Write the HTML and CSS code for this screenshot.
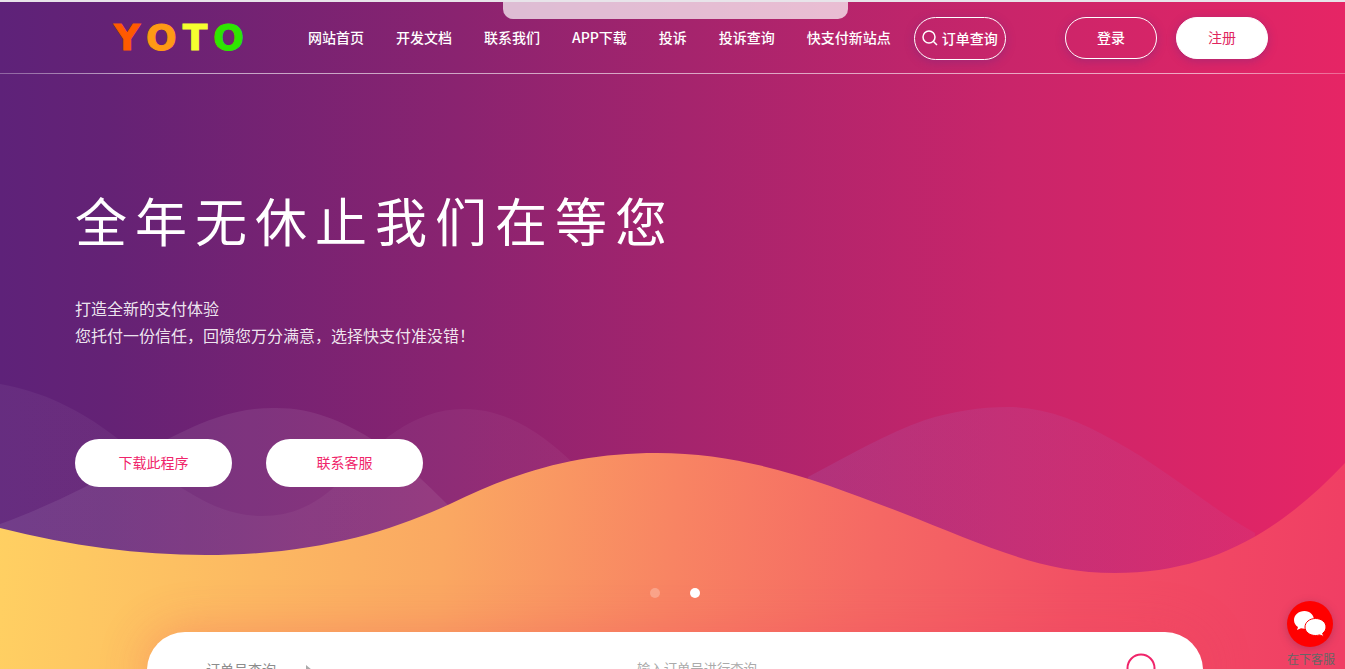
FILE: index.html
```html
<!DOCTYPE html>
<html lang="zh-CN">
<head>
    <meta charset="UTF-8">
    <meta name="viewport" content="width=device-width, initial-scale=1.0">
    <title>YOTO 快支付</title>
    <link rel="stylesheet" href="styles.css">
</head>
<body>
    <div class="page">
        <svg class="waves" viewBox="0 0 1345 669" preserveAspectRatio="none" aria-hidden="true">
            <defs>
                <linearGradient id="sunset" gradientUnits="userSpaceOnUse" x1="0" y1="500" x2="1345" y2="620">
                    <stop offset="0" stop-color="#ffd062"/>
                    <stop offset="0.33" stop-color="#faa862"/>
                    <stop offset="0.5" stop-color="#f88463"/>
                    <stop offset="0.65" stop-color="#f56864"/>
                    <stop offset="0.8" stop-color="#f25064"/>
                    <stop offset="1" stop-color="#f03e64"/>
                </linearGradient>
                <linearGradient id="haze" x1="0" y1="0" x2="1" y2="0">
                    <stop offset="0" stop-color="#fff" stop-opacity="0.05"/>
                    <stop offset="1" stop-color="#fff" stop-opacity="0.04"/>
                </linearGradient>
                <linearGradient id="hill" x1="0" y1="0" x2="1" y2="0">
                    <stop offset="0" stop-color="#a87ccc" stop-opacity="0.16"/>
                    <stop offset="1" stop-color="#a87ccc" stop-opacity="0.08"/>
                </linearGradient>
            </defs>
            <path fill="url(#haze)" d="M0 384C42 391 80 410 113 435C145 460 160 475 185 490C210 506 235 516 262 516C295 516 318 503 342 480C375 445 412 409 464 409C510 409 545 437 572 462L572 600L0 600Z"/>
            <path fill="#fff" fill-opacity="0.08" d="M0 524C30 513 57 501 85 487C118 468 148 448 180 433C212 417 244 407 277 408C312 408 342 421 370 438C400 458 425 482 449 506L449 600L0 600Z"/>
            <path fill="url(#hill)" d="M808 477C850 455 885 434 925 420C954 411 980 407 1008 407C1045 407 1080 421 1113 440C1165 468 1210 508 1255 533L1255 600L808 600Z"/>
            <path fill="url(#sunset)" d="M0 528C70 546 140 555 205 555C310 555 385 534 450 504C520 470 580 453 657 453C745 453 820 481 900 512C985 545 1040 573 1115 573C1210 573 1280 532 1345 463V669H0Z"/>
        </svg>
        <div class="notch"></div>

        <header class="header">
            <div class="header-inner">
                <a class="logo" href="#" aria-label="YOTO">
                    <span class="logo-red">Y</span>
                    <span class="logo-orange">O</span>
                    <span class="logo-yellow">T</span>
                    <span class="logo-green">O</span>
                </a>
                <nav class="nav">
                    <a href="#">网站首页</a>
                    <a href="#">开发文档</a>
                    <a href="#">联系我们</a>
                    <a href="#">APP下载</a>
                    <a href="#">投诉</a>
                    <a href="#">投诉查询</a>
                    <a href="#">快支付新站点</a>
                </nav>
                <a class="pill pill-search" href="#">
                    <svg class="icon-search" viewBox="0 0 16 16" aria-hidden="true">
                        <circle cx="7" cy="7" r="6"/>
                        <path d="M11.5 11.5L15 15"/>
                    </svg>
                    订单查询
                </a>
                <div class="account">
                    <a class="pill" href="#">登录</a>
                    <a class="pill pill-solid" href="#">注册</a>
                </div>
            </div>
        </header>

        <main class="hero">
            <div class="hero-text">
                <h1>全年无休止我们在等您</h1>
                <p>打造全新的支付体验<br>您托付一份信任，回馈您万分满意，选择快支付准没错！</p>
                <div class="actions">
                    <a class="action" href="#">下载此程序</a>
                    <a class="action" href="#">联系客服</a>
                </div>
            </div>
            <div class="slider">
                <div class="dots">
                    <button class="dot" type="button" aria-label="1"></button>
                    <button class="dot dot-active" type="button" aria-label="2"></button>
                </div>
                <form class="search">
                    <div class="search-type">
                        <select aria-label="订单号查询">
                            <option>订单号查询</option>
                        </select>
                        <svg class="arrow" viewBox="0 0 6 10" aria-hidden="true">
                            <path d="M0 0L6 5L0 10Z"/>
                        </svg>
                    </div>
                    <input class="search-input" type="text" placeholder="输入订单号进行查询" aria-label="订单号">
                    <button class="search-button" type="submit" aria-label="查询">
                        <svg viewBox="0 0 34 34" aria-hidden="true">
                            <circle cx="15" cy="15" r="13.5"/>
                            <path d="M25 25L32 32"/>
                        </svg>
                    </button>
                </form>
            </div>
        </main>

        <a class="chat" href="#">
            <span class="chat-circle">
                <svg viewBox="0 0 34 28" aria-hidden="true">
                    <path fill="#fff" d="M11.500 1C5.500 1 1 5 1 10C1 13 2.500 15.500 5 17L4 20L8 18.300C9.500 18.700 11 18.800 12.500 18.700C17.500 18.300 21 14.500 21 10C21 5 17 1 11.500 1Z"/>
                    <path fill="#fff" stroke="#f00" d="M22.500 8.500C16.500 8.500 12 12.300 12 17C12 21.800 16.500 25.500 22.500 25.500C24 25.500 25.300 25.300 26.500 24.900L30.800 26.500L29.600 23.300C31.800 21.800 33 19.500 33 17C33 12.300 28.500 8.500 22.500 8.500Z"/>
                </svg>
            </span>
            <span class="chat-label">在下客服</span>
        </a>
    </div>
</body>
</html>
```
FILE: styles.css
```css
body, h1, p {
    margin: 0;
    padding: 0;
}

* {
    box-sizing: border-box;
}

body {
    font-family: "Noto Sans CJK SC", sans-serif;
    font-size: 14px;
    color: white;
}

a {
    color: inherit;
    text-decoration: none;
}

button, input, select {
    font-family: inherit;
    border: none;
    background: none;
    padding: 0;
    outline: none;
}

.page {
    position: relative;
    height: 100vh;
    overflow: hidden;
    border-top: 2px solid #e8e4ea;
    background: linear-gradient(90deg, #5e2279 0%, #642275 8%, #8a2370 34%, #a5246d 51%, #c9256a 75%, #e62565 100%);
}

.waves {
    position: absolute;
    left: 0;
    top: -2px;
    width: 100%;
    height: 100vh;
}

.notch {
    position: absolute;
    left: 50%;
    top: 0;
    width: 345px;
    height: 17px;
    margin-left: -170px;
    border-radius: 0 0 10px 10px;
    background: rgba(255, 255, 255, 0.7);
}

/* header */
.header {
    position: relative;
    background: linear-gradient(90deg, rgba(255, 255, 255, 0.3), rgba(255, 255, 255, 0.6) 10%, rgba(255, 255, 255, 0.6) 90%, rgba(255, 255, 255, 0.3)) bottom / 100% 1px no-repeat;
}

.header-inner {
    display: flex;
    align-items: center;
    height: 72px;
    padding: 0 77px 0 114px;
}

.logo {
    display: flex;
    gap: 6px;
    width: 194px;
    font-family: "DejaVu Sans", sans-serif;
    font-size: 36px;
    font-weight: bold;
    line-height: 40px;
    -webkit-text-stroke: 1px;
}

.logo-red {
    color: #ff5a00;
}

.logo-orange {
    color: #ff9a14;
}

.logo-yellow {
    color: #f6ff2e;
}

.logo-green {
    color: #2ee600;
}

.nav {
    display: flex;
    gap: 32px;
    margin-right: 23px;
    padding-bottom: 3px;
    font-weight: 500;
    white-space: nowrap;
}

.pill {
    display: flex;
    align-items: center;
    justify-content: center;
    gap: 4px;
    width: 92px;
    height: 42px;
    padding-bottom: 2px;
    border: 1px solid white;
    border-radius: 21px;
    font-weight: 500;
    white-space: nowrap;
    box-shadow: 0 2px 10px rgba(110, 40, 130, 0.4);
}

.pill-search {
    height: 43px;
    padding-bottom: 0;
    border-radius: 22px;
}

.pill-solid {
    background: white;
    color: #e0245e;
    font-weight: normal;
}

.icon-search {
    width: 16px;
    height: 16px;
    fill: none;
    stroke: white;
    stroke-width: 1.5;
}

.account {
    display: flex;
    gap: 19px;
    margin-left: auto;
}

/* hero */
.hero {
    position: relative;
    padding-top: 111px;
}

.hero-text {
    padding: 0 75px;
}

.hero h1 {
    font-size: 52px;
    font-weight: normal;
    line-height: 70px;
    letter-spacing: 8px;
}

.hero p {
    margin-top: 40px;
    font-size: 16px;
    line-height: 27px;
    color: rgba(255, 255, 255, 0.9);
}

.actions {
    display: flex;
    gap: 34px;
    margin-top: 90px;
}

.action {
    width: 157px;
    padding-bottom: 2px;
    border-radius: 24px;
    background: white;
    color: #f0246a;
    line-height: 46px;
    text-align: center;
}

.slider {
    padding-left: 5px;
}

.dots {
    display: flex;
    justify-content: center;
    gap: 30px;
    margin-top: 101px;
}

.dot {
    width: 10px;
    height: 10px;
    border-radius: 50%;
    background: rgba(255, 255, 255, 0.25);
}

.dot-active {
    background: white;
}

.search {
    display: flex;
    align-items: center;
    max-width: 1056px;
    height: 76px;
    margin: 34px auto 0;
    padding: 0 43px 0 59px;
    border-radius: 38px;
    background: white;
    box-shadow: 0 0 50px rgba(240, 60, 90, 0.3);
}

.search-type {
    display: flex;
    align-items: center;
    gap: 30px;
    width: 431px;
}

.search-type select {
    appearance: none;
    padding-bottom: 2px;
    font-size: 14px;
    color: #8c8c8c;
}

.arrow {
    width: 6px;
    height: 10px;
    fill: #aaa;
}

.search-input {
    flex: 1;
    padding-bottom: 4px;
}

.search-input::placeholder {
    color: #aaa;
}

.search-button {
    width: 34px;
    height: 34px;
}

.search-button svg {
    display: block;
    fill: none;
    stroke: #f0246a;
    stroke-width: 2;
}

/* customer service */
.chat {
    position: absolute;
    right: 10px;
    bottom: 0;
    width: 48px;
    color: #666;
    font-size: 12px;
    line-height: 20px;
    white-space: nowrap;
}

.chat-circle {
    display: flex;
    align-items: center;
    justify-content: center;
    width: 46px;
    height: 46px;
    margin-bottom: 2px;
    border-radius: 50%;
    background: #f00;
    box-shadow: 0 2px 8px rgba(120, 40, 80, 0.4);
}

.chat-circle svg {
    width: 34px;
    height: 28px;
}
```
